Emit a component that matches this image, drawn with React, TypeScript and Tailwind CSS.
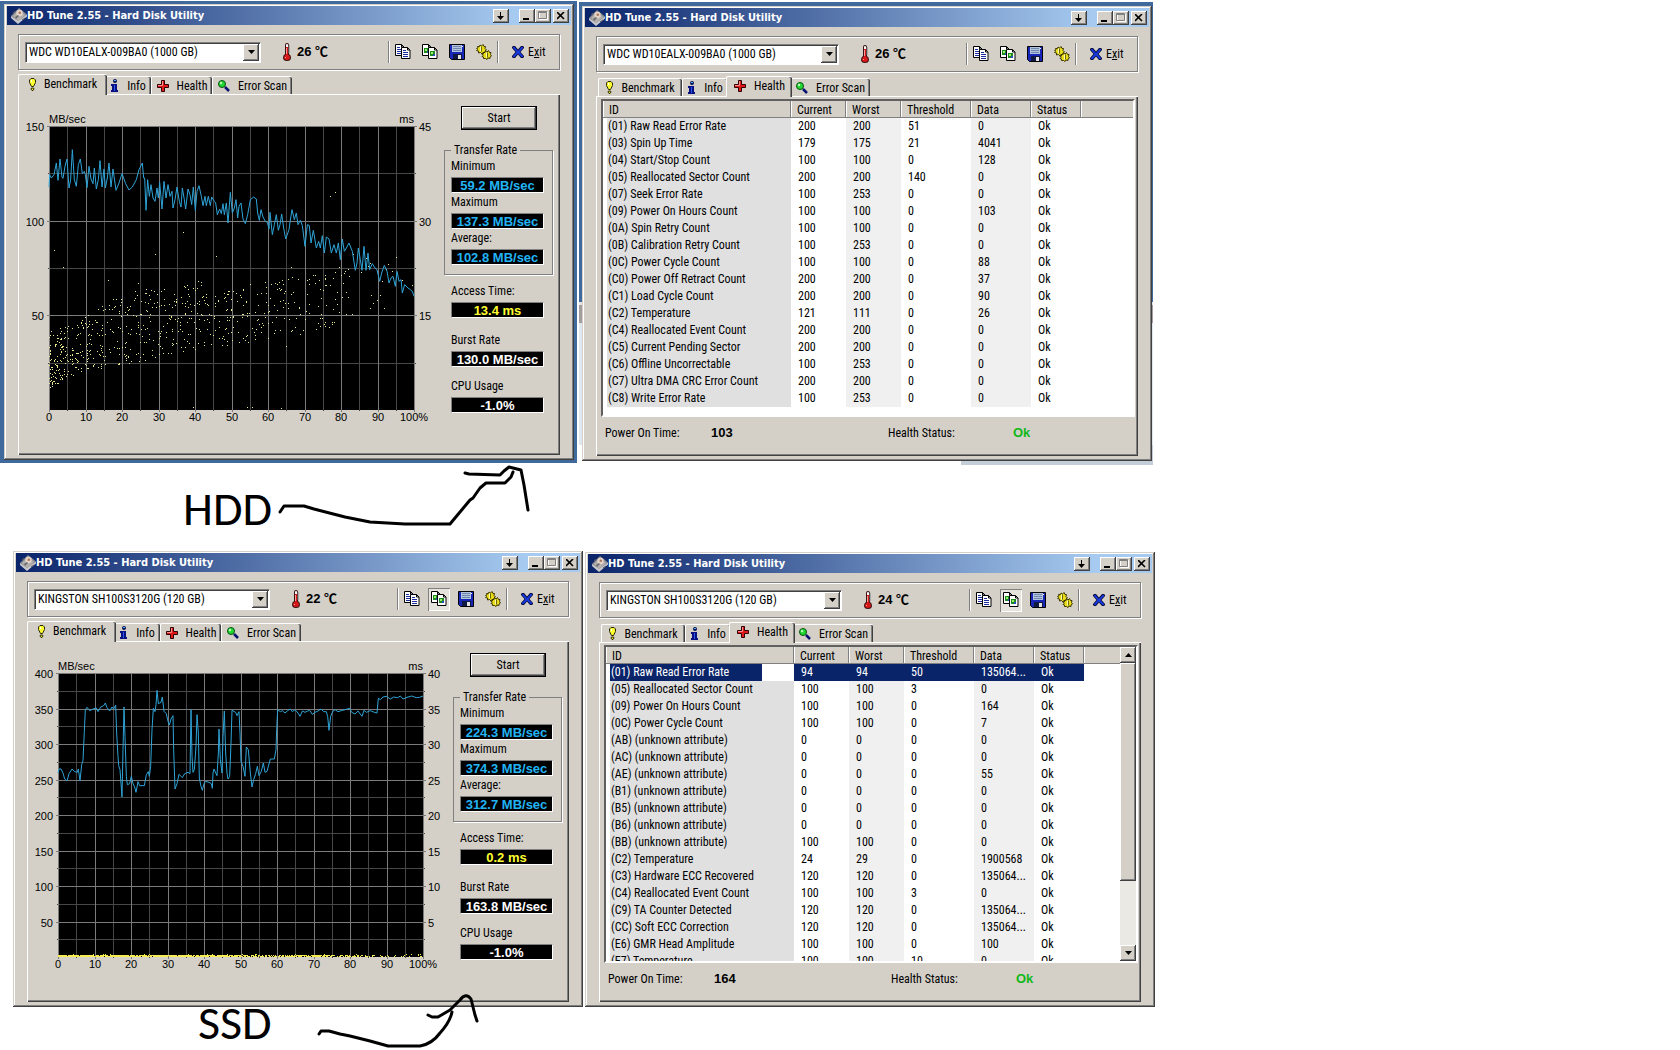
import React from "react";

const UI = "font-['Roboto_Condensed','Liberation_Sans',sans-serif]";
const RAISED =
  "bg-[#d4d0c8] shadow-[inset_-1px_-1px_#404040,inset_1px_1px_#ffffff,inset_-2px_-2px_#808080]";

/* ---------- icons ---------- */

function DiskIcon() {
  return (
    <svg width="16" height="16" viewBox="0 0 16 16" aria-hidden="true">
      <path d="M0 8 8 0l8 6.500L7 15z" fill="#8e8e92" />
      <path d="M0 8l7 5 9-6.500v2L7 16 0 10z" fill="#c8c8cc" />
      <path d="M2 8 8 2l6 5-7 6z" fill="#b4b0ae" />
      <circle cx="8.500" cy="5" r="3.200" fill="#e4d4c8" />
      <circle cx="8.800" cy="4.800" r="1.300" fill="#a8765c" />
      <path d="M4 9l3-2 1 1-3 3z" fill="#6a6a6e" />
      <path d="M2 5l2-2M11 12l3-2" stroke="#55555a" />
    </svg>
  );
}

function ThermometerIcon() {
  return (
    <svg width="12" height="18" viewBox="0 0 12 18" aria-hidden="true">
      <path d="M4 2q0-2 2-2t2 2v9q2 1 2 3.500Q10 18 6 18T2 14.500Q2 12 4 11z" fill="#3a1010" />
      <path d="M5 2q0-1 1-1t1 1v4H5z" fill="#ffffff" />
      <path d="M5 4h2v7.500q2 1 2 3Q9 17 6 17t-3-2.500q0-2 2-3z" fill="#d81818" />
      <path d="M4 14h1v1H4zM5 5h1v6H5z" fill="#ff9c9c" />
      <path d="M8 2v8" stroke="#808080" />
    </svg>
  );
}

function Page({ x, y, children }: { x: number; y: number; children: React.ReactNode }) {
  return (
    <g transform={`translate(${x} ${y})`}>
      <path d="M.5.5h6l2.500 2.500v8.500h-8.500z" fill="#fff" stroke="#000" />
      <path d="M6.500.5v2.500H9" fill="none" stroke="#000" />
      {children}
    </g>
  );
}

function CopyTextIcon() {
  const lines = <path d="M2 3.500h3M2 5.500h5M2 7.500h5M2 9.500h5" stroke="#1c2ca0" />;
  return (
    <svg width="16" height="16" viewBox="0 0 16 16" aria-hidden="true">
      <Page x={0} y={0}>{lines}</Page>
      <Page x={6} y={3}>{lines}</Page>
    </svg>
  );
}

function CopyImageIcon() {
  const shot = (
    <>
      <path d="M2 4h5v5H2z" fill="#1c8a1c" />
      <path d="M3 5h2v2H3z" fill="#9df06a" />
      <path d="M5 7h2v2H5z" fill="#2b4fc0" />
    </>
  );
  return (
    <svg width="16" height="16" viewBox="0 0 16 16" aria-hidden="true">
      <Page x={0} y={0}>{shot}</Page>
      <Page x={6} y={3}>{shot}</Page>
    </svg>
  );
}

function SaveIcon() {
  return (
    <svg width="16" height="16" viewBox="0 0 16 16" aria-hidden="true">
      <path d="M.5.5h15v15H2.500l-2-2z" fill="#1826b8" stroke="#000" />
      <path d="M3 1h10v7H3z" fill="#b4c4dc" />
      <path d="M4 2.500h8M4 4.500h8M4 6.500h8" stroke="#7088b0" />
      <path d="M4 10h9v5H4z" fill="#101840" />
      <path d="M9 11h3v4H9z" fill="#e4e4e4" />
      <path d="M13 2h1v1h-1z" fill="#fff" />
    </svg>
  );
}

function OptionsIcon() {
  return (
    <svg width="16" height="16" viewBox="0 0 16 16" aria-hidden="true">
      <g fill="#e8dc18" stroke="#3c3800" strokeWidth="1">
        <path d="M.5 4.500 2 4 1.500 2.500 3.500 2.500 4 1 5.500 2 7 .5 8 2.500 9.500 2.500 9 4.500 10.500 6 9 7 9 8.500 7 8.500 6 10 4.500 8.500 2.500 9 2.500 7 .5 6.500 1.500 5.500z" />
        <path d="M6 10.500 7.500 10 7 8.500 9 8.500 9.500 7 11 8 12.500 6.500 13.500 8.500 15 8.500 14.500 10.500 15.500 12 14 13 14 14.500 12 14 11 15.500 9.500 14.500 7.500 14.500 7.500 13 6 12.500 7 11.500z" />
      </g>
      <path d="M4.500 2.500v5M10.500 8.500v5" stroke="#fffbb0" />
      <path d="M5.500 2.500v5M11.500 8.500v5" stroke="#6d6600" />
    </svg>
  );
}

function ExitIcon() {
  return (
    <svg width="12" height="12" viewBox="0 0 12 12" aria-hidden="true">
      <path d="M0 1l1-1h2l3 3.500L9 0h2l1 1v1L8.500 6 12 10v1l-1 1H9L6 8.500 3 12H1l-1-1v-1L3.500 6 0 2z" fill="#060a3c" />
      <path d="M1 1h1.500L6 5l3.500-4H11v1L7.500 6 11 10v1H9.500L6 7.500 2.500 11H1v-1l3.500-4L1 2z" fill="#1838e0" />
    </svg>
  );
}

function BulbIcon() {
  return (
    <svg width="7" height="13" viewBox="0 0 7 13" aria-hidden="true">
      <path d="M2 .5h3L6.500 2v2.500L4.500 8.500h-2L.5 4.500V2z" fill="#ffff30" stroke="#2a2a00" />
      <path d="M2 2h1v2H2z" fill="#fff" />
      <path d="M2.500 10h2l.5 1-1 1.500H3L2 11z" fill="#f0e820" stroke="#2a2a00" />
    </svg>
  );
}

function InfoIcon() {
  return (
    <svg width="8" height="13" viewBox="0 0 8 13" aria-hidden="true">
      <circle cx="4" cy="2" r="2" fill="#061050" />
      <path d="M3 1h2v1H3z" fill="#4cb0ff" />
      <path d="M1 5h5v6h1v2H0v-2h1V7H0V5z" fill="#061080" />
      <path d="M3 6h1v6H3z" fill="#2a58f0" />
    </svg>
  );
}

function CrossIcon() {
  return (
    <svg width="12" height="12" viewBox="0 0 12 12" aria-hidden="true">
      <path d="M4.500.5h3v4h4v3h-4v4h-3v-4h-4v-3h4z" fill="#e01818" stroke="#300" />
      <path d="M5.500 1v4.500H1" fill="none" stroke="#ff9090" />
    </svg>
  );
}

function MagnifierIcon() {
  return (
    <svg width="12" height="12" viewBox="0 0 12 12" aria-hidden="true">
      <path d="M7 7l4 4" stroke="#081070" strokeWidth="2.500" />
      <circle cx="4" cy="4" r="3.500" fill="#22d832" stroke="#0a5010" />
      <circle cx="3" cy="3" r="1.200" fill="#b8ffb8" />
    </svg>
  );
}

/* ---------- window shell ---------- */

const captionButton = "flex h-[14px] w-4 items-center justify-center " + RAISED;

function TitleBar() {
  return (
    <header className="flex h-[19px] items-center bg-linear-to-r/srgb from-[#0a246a] to-[#a6caf0] to-90% pl-1 pr-[2px]">
      <DiskIcon />
      <h2 className="flex-1 font-['DejaVu_Sans_Condensed','Noto_Sans',sans-serif] text-[11px] font-bold leading-4 text-white">
        HD Tune 2.55 - Hard Disk Utility
      </h2>
      <button aria-label="Minimize to tray" className={captionButton + " mr-[10px]"}>
        <svg width="8" height="8" viewBox="0 0 8 8"><path d="M3 0h1v4h3L3.500 8 0 4h3z" /></svg>
      </button>
      <button aria-label="Minimize" className={captionButton}>
        <svg width="8" height="8" viewBox="0 0 8 8"><path d="M0 6h6v2H0z" /></svg>
      </button>
      <button aria-label="Maximize" disabled className={captionButton}>
        <svg width="10" height="9" viewBox="0 0 10 9">
          <path d="M1.500 1.500h8v7h-8z" fill="none" stroke="#fff" />
          <path d="M.5.5h8v7h-8zM.5 1.500h8" fill="none" stroke="#808080" />
        </svg>
      </button>
      <button aria-label="Close" className={captionButton + " ml-[2px]"}>
        <svg width="8" height="8" viewBox="0 0 8 8"><path d="M0 0l7 7M7 0L0 7" stroke="#000" strokeWidth="1.600" /></svg>
      </button>
    </header>
  );
}

function ToolButton({ label, pressed, children }: { label: string; pressed?: boolean; children: React.ReactNode }) {
  return (
    <button
      aria-label={label}
      className={
        "flex h-[23px] w-[22px] items-center justify-center " +
        (pressed ? "bg-[#e6e3dd] shadow-[inset_1px_1px_#808080,inset_-1px_-1px_#ffffff]" : "")
      }
    >
      {children}
    </button>
  );
}

function Separator() {
  return <div className="h-[22px] w-[2px] border-l border-r border-l-[#808080] border-r-white" />;
}

function Toolbar({ drive, temp, pressed }: { drive: string; temp: number; pressed?: boolean }) {
  return (
    <div className="mx-[11px] mt-[9px] flex h-9 items-center border border-[#808080] pl-[6px] pr-1 shadow-[inset_1px_1px_#ffffff,1px_1px_#ffffff]">
      <div className="relative w-[236px]">
        <select
          aria-label="Drive"
          className="block h-[21px] w-full appearance-none border border-t-[#808080] border-l-[#808080] border-b-white border-r-white bg-white pl-[3px] text-[12px] leading-4 shadow-[inset_1px_1px_#404040]"
        >
          <option>{drive}</option>
        </select>
        <div className={"pointer-events-none absolute right-[2px] top-[2px] flex h-[17px] w-4 items-center justify-center " + RAISED}>
          <svg width="7" height="4" viewBox="0 0 7 4"><path d="M0 0h7L3.500 4z" /></svg>
        </div>
      </div>
      <div className="ml-5 flex items-center gap-1 font-['Liberation_Sans','Noto_Sans_CJK_SC',sans-serif] text-[13px] font-bold">
        <ThermometerIcon />
        <span>{temp} ℃</span>
      </div>
      <div className="ml-auto flex items-center">
        <Separator />
        <div className="mx-[2px] flex gap-[5px]">
          <ToolButton label="Copy text"><CopyTextIcon /></ToolButton>
          <ToolButton label="Copy screenshot" pressed={pressed}><CopyImageIcon /></ToolButton>
          <ToolButton label="Save"><SaveIcon /></ToolButton>
          <ToolButton label="Options"><OptionsIcon /></ToolButton>
        </div>
        <Separator />
        <button className="flex h-[22px] w-14 items-center gap-1 pl-[13px] text-[12px]">
          <ExitIcon />
          <span>E<span className="underline">x</span>it</span>
        </button>
      </div>
    </div>
  );
}

const tabs = [
  { name: "Benchmark", icon: <BulbIcon />, on: "w-[89px]", off: "w-[84px]" },
  { name: "Info", icon: <InfoIcon />, on: "w-[50px]", off: "w-[46px]" },
  { name: "Health", icon: <CrossIcon />, on: "w-[66px]", off: "w-[61px]" },
  { name: "Error Scan", icon: <MagnifierIcon />, on: "w-[84px]", off: "w-[80px]" },
];

function Tabs({ active }: { active: string }) {
  return (
    <div role="tablist" className="relative mt-1 flex h-5 items-end pl-[13px]">
      {tabs.map((t) => {
        const on = t.name === active;
        return (
          <button
            key={t.name}
            role="tab"
            aria-selected={on}
            className={
              "flex items-center justify-center gap-2 rounded-t-[2px] border-l border-t border-l-white border-t-white bg-[#d4d0c8] text-[12px] leading-4 shadow-[inset_-1px_0_#404040,inset_-2px_0_#808080] " +
              (on ? "relative z-10 -mx-[2px] -mb-px h-[21px] pb-[2px] " + t.on : "h-[18px] " + t.off)
            }
          >
            {t.icon}
            {t.name}
          </button>
        );
      })}
    </div>
  );
}

type WindowProps = {
  place: string;
  drive: string;
  temp: number;
  tab: string;
  pressed?: boolean;
  children: React.ReactNode;
};

function HdTuneWindow({ place, drive, temp, tab, pressed, children }: WindowProps) {
  return (
    <section
      className={
        "absolute w-[570px] bg-[#d4d0c8] px-[3px] pb-[5px] pt-[2px] shadow-[inset_-1px_-1px_#404040,inset_1px_1px_#d4d0c8,inset_-2px_-2px_#808080,inset_2px_2px_#ffffff] " +
        place
      }
    >
      <TitleBar />
      <Toolbar drive={drive} temp={temp} pressed={pressed} />
      <Tabs active={tab} />
      <div
        role="tabpanel"
        className="mx-[11px] border-l border-t border-l-white border-t-white shadow-[inset_-1px_-1px_#404040,inset_-2px_-2px_#808080]"
      >
        {children}
      </div>
    </section>
  );
}

/* ---------- benchmark ---------- */

const GW = 365;
const GH = 284;
const OX = 30;
const OY = 30;

type ChartProps = {
  name: string;
  left: number[];
  right: number[];
  steps: number;
  line: string;
  origin: [number, number];
  dots: number[][];
  dotColor: string;
};

function Chart({ name, left, right, steps, line, origin, dots, dotColor }: ChartProps) {
  const ticks = Array.from({ length: 21 }, (_, i) => i);
  const rows = Array.from({ length: steps * 2 + 1 }, (_, i) => i);
  const xAt = (i: number) => Math.round((GW * i) / 20) + 0.5;
  const yAt = (i: number) => Math.round((GH * i) / (steps * 2)) + 0.5;
  return (
    <svg
      role="img"
      aria-label={name}
      width="425"
      height="359"
      viewBox="0 0 425 359"
      className="shrink-0 font-['Liberation_Sans',sans-serif] text-[11px]"
    >
      <text x={OX} y="27">MB/sec</text>
      <text x={OX + GW} y="27" textAnchor="end">ms</text>
      {left.map((v, i) => (
        <text key={v} x={OX - 5} y={OY + yAt(i * 2) + 4} textAnchor="end">{v}</text>
      ))}
      {right.map((v, i) => (
        <text key={v} x={OX + GW + 5} y={OY + yAt(i * 2) + 4}>{v}</text>
      ))}
      {ticks.filter((i) => i % 2 === 0).map((i) => (
        <text key={i} x={OX + xAt(i) - 0.5} y={OY + GH + 11} textAnchor="middle">
          {i === 20 ? "100%" : i * 5}
        </text>
      ))}
      <g transform={`translate(${OX} ${OY})`}>
        <rect width={GW + 1} height={GH} fill="#000" />
        <g stroke="#474747">
          {ticks.filter((i) => i % 2).map((i) => <path key={i} d={`M${xAt(i)} 0V${GH + 1}`} />)}
          {rows.filter((i) => i % 2).map((i) => <path key={i} d={`M-1 ${yAt(i)}H${GW + 2}`} />)}
        </g>
        <g stroke="#7b7b7b">
          {ticks.filter((i) => i % 2 === 0).map((i) => <path key={i} d={`M${xAt(i)} 0V${GH + 2}`} />)}
          {rows.filter((i) => i % 2 === 0 && i < steps * 2).map((i) => (
            <path key={i} d={`M-2 ${yAt(i)}H${GW + 3}`} />
          ))}
        </g>
        {dots.map(([x, y], i) => <rect key={i} x={x} y={y} width="1" height="1" fill={dotColor} />)}
        <g transform={`scale(${1 / 3}) translate(${-origin[0]} ${-origin[1]})`}>
          <polyline points={line} fill="none" stroke="#2fa4d8" strokeWidth="3" />
        </g>
      </g>
    </svg>
  );
}

const hddLine =
  "148,262 150,225 155,235 163,225 170,190 175,242 181,178 187,232 190,236 196,200 202,178 208,265 213,240 218,150 224,240 230,260 236,195 242,178 248,222 254,215 257,225 262,264 268,200 274,238 280,252 284,205 290,268 296,240 301,183 307,262 313,208 317,265 323,235 328,190 334,262 340,208 349,272 358,250 367,222 378,252 388,271 398,262 410,240 418,210 428,190 432,235 435,235 439,332 444,240 449,290 454,255 460,295 466,305 472,265 476,295 480,248 487,328 493,245 499,295 505,255 511,290 517,275 520,325 526,300 532,262 539,305 544,322 548,265 554,300 558,328 565,268 571,285 576,315 581,262 587,332 592,275 598,258 605,290 610,318 616,290 620,318 626,290 632,318 636,292 644,305 648,310 653,345 660,328 665,342 670,312 674,345 680,310 685,370 692,278 698,340 704,325 709,300 714,355 718,320 724,310 730,358 737,372 744,345 752,300 762,292 770,298 774,340 779,362 784,330 790,352 797,365 803,368 808,388 811,338 818,405 824,375 830,345 836,392 841,375 846,343 852,385 858,418 868,390 873,355 877,330 884,360 890,340 895,375 902,362 908,378 916,440 923,375 929,378 934,430 941,392 950,445 957,425 962,445 968,408 974,460 980,412 988,418 995,460 1003,435 1010,460 1016,430 1022,480 1028,418 1034,455 1040,445 1048,430 1058,455 1067,512 1072,490 1076,445 1082,480 1087,512 1093,440 1099,512 1105,460 1110,510 1118,492 1126,505 1132,510 1140,545 1146,520 1154,497 1162,515 1168,550 1174,535 1180,530 1187,560 1192,515 1198,545 1204,540 1208,580 1215,555 1225,565 1232,570 1238,575 1243,590";

const ssdLine =
  "175,370 178,358 184,358 190,370 195,388 202,394 208,372 217,358 225,366 233,368 236,358 241,394 246,345 250,332 254,245 257,180 262,173 270,183 280,178 290,175 295,186 303,172 312,168 317,160 322,174 330,184 337,172 342,178 348,166 351,250 355,320 357,348 361,360 367,442 370,300 373,172 376,260 380,380 383,405 390,402 395,380 400,402 405,412 409,428 415,396 420,408 434,408 440,375 446,366 449,380 453,350 457,240 461,176 466,186 469,165 472,122 476,162 484,158 488,142 493,185 500,192 505,215 509,226 514,208 520,198 522,300 526,418 532,402 538,374 548,384 555,372 565,368 571,372 574,180 577,320 580,368 584,360 589,290 592,195 596,250 599,385 604,410 608,422 613,402 618,395 628,398 635,402 638,416 640,370 643,358 652,378 656,310 658,238 662,330 667,370 670,260 674,184 678,310 682,370 685,388 690,380 694,280 697,182 708,188 712,198 718,186 721,250 724,335 730,350 736,380 740,292 746,300 752,370 757,412 762,390 768,372 773,350 778,378 785,365 791,340 796,368 802,365 812,328 824,328 829,300 831,240 834,180 842,186 848,183 856,190 864,183 872,178 878,186 886,180 895,190 901,200 908,184 916,188 924,184 930,182 938,194 946,188 955,184 964,178 972,186 980,186 984,200 988,242 993,200 1000,184 1006,180 1015,186 1025,183 1036,180 1050,176 1056,188 1066,193 1075,184 1087,200 1093,182 1100,188 1112,183 1124,188 1132,190 1136,146 1142,150 1150,142 1160,140 1172,148 1182,142 1194,144 1202,139 1210,148 1222,143 1236,139 1250,144 1260,143 1270,139";

function makeRandom(seed: number) {
  let s = seed;
  return () => {
    s = (s * 1103515245 + 12345) % 2147483648;
    return s / 2147483648;
  };
}

/* Access times: dense near the start of the disk, rising and thinning toward the end. */
function hddDots() {
  const rnd = makeRandom(77);
  const out: number[][] = [
    [5, 124], [14, 141], [59, 154], [134, 106], [106, 128], [167, 130], [89, 157], [281, 70], [286, 66],
    [242, 141], [144, 281], [198, 281], [203, 281], [232, 282], [237, 220], [347, 131], [312, 146],
    [339, 138], [343, 145], [335, 182], [322, 169], [319, 140], [337, 143], [303, 188], [363, 159], [353, 154],
    [328, 174], [321, 182], [324, 177], [331, 169], [333, 155], [290, 141], [304, 128], [300, 150], [299, 171],
    [317, 132], [321, 137], [297, 188], [290, 186], [273, 192],
  ];
  const low = [262, 246, 242, 236, 228, 222, 219, 214, 212, 204, 192, 188, 184];
  const high = [205, 195, 172, 160, 158, 153, 156, 152, 150, 148, 138, 132, 128];
  for (let i = 0; i < 830; i++) {
    const t = Math.pow(rnd(), 1.35) * 0.82;
    const p = t * 12;
    const k = Math.floor(p);
    const f = p - k;
    const lo = low[k] + (low[k + 1] - low[k]) * f;
    const hi = high[k] + (high[k + 1] - high[k]) * f;
    if (rnd() < t * 0.6) continue;
    out.push([Math.round(t * GW), Math.round(lo + (hi - lo) * Math.pow(rnd(), 1.15))]);
  }
  return out;
}

function ssdDots() {
  const rnd = makeRandom(5);
  const out: number[][] = [];
  for (let x = 0; x < GW; x++) {
    const density = x < 180 ? 0.97 : x < 270 ? 0.8 : x < 310 ? 0.5 : 0.22;
    if (rnd() < density) out.push([x, 283]);
    if (rnd() < density * 0.9) out.push([x, 282]);
    if (rnd() < 0.04) out.push([x, 281]);
  }
  return out;
}

function Reading({ label, value, color }: { label: string; value: string; color: string }) {
  return (
    <label className="block">
      <span className="block">{label}</span>
      <output
        className={
          "mt-[3px] block h-4 w-[93px] border border-t-[#808080] border-l-[#808080] border-b-white border-r-white bg-black text-center font-['Liberation_Sans',sans-serif] text-[13px] font-bold leading-[15px] " +
          color
        }
      >
        {value}
      </output>
    </label>
  );
}

function Benchmark({ chart, values }: { chart: ChartProps; values: string[] }) {
  return (
    <div className="flex pt-px">
      <Chart {...chart} />
      <div className="text-[12px] leading-4">
        <button className="ml-[17px] mt-[10px] block h-6 w-[76px] border border-black bg-[#d4d0c8] text-center leading-5 shadow-[inset_-1px_-1px_#404040,inset_1px_1px_#ffffff,inset_-2px_-2px_#808080]">
          Start
        </button>
        <fieldset className="mt-3 w-[109px] border border-[#808080] pb-[9px] pl-[6px] shadow-[1px_1px_#ffffff]">
          <legend className="px-[3px]">Transfer Rate</legend>
          <div className="flex flex-col gap-px">
            <Reading label="Minimum" value={values[0]} color="text-[#22b4f4]" />
            <Reading label="Maximum" value={values[1]} color="text-[#22b4f4]" />
            <Reading label="Average:" value={values[2]} color="text-[#22b4f4]" />
          </div>
        </fieldset>
        <div className="ml-[7px] mt-2 flex flex-col">
          <Reading label="Access Time:" value={values[3]} color="text-[#ffff30]" />
          <div className="mb-[11px] mt-[14px]">
            <Reading label="Burst Rate" value={values[4]} color="text-white" />
          </div>
          <Reading label="CPU Usage" value={values[5]} color="text-white" />
        </div>
      </div>
    </div>
  );
}

/* ---------- health ---------- */

type Row = [string, string, string, string, string];

const hddRows: Row[] = [
  ["(01) Raw Read Error Rate", "200", "200", "51", "0"],
  ["(03) Spin Up Time", "179", "175", "21", "4041"],
  ["(04) Start/Stop Count", "100", "100", "0", "128"],
  ["(05) Reallocated Sector Count", "200", "200", "140", "0"],
  ["(07) Seek Error Rate", "100", "253", "0", "0"],
  ["(09) Power On Hours Count", "100", "100", "0", "103"],
  ["(0A) Spin Retry Count", "100", "100", "0", "0"],
  ["(0B) Calibration Retry Count", "100", "253", "0", "0"],
  ["(0C) Power Cycle Count", "100", "100", "0", "88"],
  ["(C0) Power Off Retract Count", "200", "200", "0", "37"],
  ["(C1) Load Cycle Count", "200", "200", "0", "90"],
  ["(C2) Temperature", "121", "111", "0", "26"],
  ["(C4) Reallocated Event Count", "200", "200", "0", "0"],
  ["(C5) Current Pending Sector", "200", "200", "0", "0"],
  ["(C6) Offline Uncorrectable", "100", "253", "0", "0"],
  ["(C7) Ultra DMA CRC Error Count", "200", "200", "0", "0"],
  ["(C8) Write Error Rate", "100", "253", "0", "0"],
];

const ssdRows: Row[] = [
  ["(01) Raw Read Error Rate", "94", "94", "50", "135064..."],
  ["(05) Reallocated Sector Count", "100", "100", "3", "0"],
  ["(09) Power On Hours Count", "100", "100", "0", "164"],
  ["(0C) Power Cycle Count", "100", "100", "0", "7"],
  ["(AB) (unknown attribute)", "0", "0", "0", "0"],
  ["(AC) (unknown attribute)", "0", "0", "0", "0"],
  ["(AE) (unknown attribute)", "0", "0", "0", "55"],
  ["(B1) (unknown attribute)", "0", "0", "0", "0"],
  ["(B5) (unknown attribute)", "0", "0", "0", "0"],
  ["(B6) (unknown attribute)", "0", "0", "0", "0"],
  ["(BB) (unknown attribute)", "100", "100", "0", "0"],
  ["(C2) Temperature", "24", "29", "0", "1900568"],
  ["(C3) Hardware ECC Recovered", "120", "120", "0", "135064..."],
  ["(C4) Reallocated Event Count", "100", "100", "3", "0"],
  ["(C9) TA Counter Detected", "120", "120", "0", "135064..."],
  ["(CC) Soft ECC Correction", "120", "120", "0", "135064..."],
  ["(E6) GMR Head Amplitude", "100", "100", "0", "100"],
  ["(E7) Temperature", "100", "100", "10", "0"],
];

const columns = ["ID", "Current", "Worst", "Threshold", "Data", "Status", ""];

function Scrollbar() {
  return (
    <div className="flex w-4 shrink-0 flex-col bg-[#ebe9e4]">
      <button aria-label="Scroll up" className={"flex h-4 items-center justify-center " + RAISED}>
        <svg width="7" height="4" viewBox="0 0 7 4"><path d="M0 4h7L3.500 0z" /></svg>
      </button>
      <div className={"h-[218px] " + RAISED} />
      <button aria-label="Scroll down" className={"mt-auto flex h-4 items-center justify-center " + RAISED}>
        <svg width="7" height="4" viewBox="0 0 7 4"><path d="M0 0h7L3.500 4z" /></svg>
      </button>
    </div>
  );
}

function Health({ rows, selected, hours, scroll }: { rows: Row[]; selected?: number; hours: string; scroll?: boolean }) {
  return (
    <div className="pl-1 pr-[3px] pt-[2px] text-[12px]">
      <div className="flex h-[318px] overflow-hidden border-2 border-t-[#606060] border-l-[#606060] border-b-white border-r-white bg-white">
        <div className="min-w-0 flex-1 overflow-hidden">
          <table className="w-full table-fixed border-collapse text-left">
            <colgroup>
              <col className="w-[188px]" />
              <col className="w-[55px]" />
              <col className="w-[55px]" />
              <col className="w-[70px]" />
              <col className="w-[60px]" />
              <col className="w-[50px]" />
              <col />
            </colgroup>
            <thead>
              <tr className="h-[17px] bg-[#d4d0c8] leading-4">
                {columns.map((c, i) => (
                  <th
                    key={c}
                    scope="col"
                    className={
                      "p-0 pl-[6px] font-normal " +
                      (i < 6
                        ? "shadow-[inset_0_-1px_#808080,inset_-1px_0_#808080,inset_1px_0_#ffffff]"
                        : "shadow-[inset_0_-1px_#808080,inset_1px_0_#ffffff]")
                    }
                  >
                    {c}
                  </th>
                ))}
              </tr>
            </thead>
            <tbody>
              {rows.map((r, n) => {
                const sel = n === selected;
                return (
                  <tr key={r[0]} className={"h-[17px] leading-[17px] " + (sel ? "text-white" : "")}>
                    <th scope="row" className="p-0 pl-1 font-normal">
                      <div className={"pl-px " + (sel ? "w-[152px] bg-[#0a246a]" : "bg-[#e0e0e0]")}>{r[0]}</div>
                    </th>
                    <td className={"p-0 pl-[7px] " + (sel ? "bg-[#0a246a]" : "")}>{r[1]}</td>
                    <td className={"p-0 pl-[7px] " + (sel ? "bg-[#0a246a]" : "bg-[#f0f0f0]")}>{r[2]}</td>
                    <td className={"p-0 pl-[7px] " + (sel ? "bg-[#0a246a]" : "")}>{r[3]}</td>
                    <td className={"p-0 pl-[7px] " + (sel ? "bg-[#0a246a]" : "bg-[#f0f0f0]")}>{r[4]}</td>
                    <td className={"p-0 pl-[7px] " + (sel ? "bg-[#0a246a]" : "")}>Ok</td>
                    <td className="p-0" />
                  </tr>
                );
              })}
            </tbody>
          </table>
        </div>
        {scroll && <Scrollbar />}
      </div>
      <div className="flex h-[39px] items-start pl-1 pt-2 leading-4">
        <span className="w-[106px]">Power On Time:</span>
        <b className="w-[177px] font-['Liberation_Sans',sans-serif] text-[13px]">{hours}</b>
        <span className="w-[125px]">Health Status:</span>
        <b className="font-['Liberation_Sans',sans-serif] text-[13px] text-[#10b818]">Ok</b>
      </div>
    </div>
  );
}

/* ---------- page ---------- */

const hddDotList = hddDots();
const ssdDotList = ssdDots();

export default function App() {
  return (
    <main className={"relative min-h-screen w-full overflow-hidden bg-white text-black " + UI}>
      {/* strips of the desktop that show around the upper windows */}
      <div className="absolute left-0 top-[1px] h-[462px] w-[577px] bg-[#416a9c]" />
      <div className="absolute left-[579px] top-[2px] flex h-[443px] w-[574px] flex-col bg-[#dfe8f0]">
        <div className="h-[300px] bg-[#416a9c]" />
        <div className="h-[3px] bg-[#e4e4e4]" />
        <div className="h-[18px] bg-[#a39d9d]" />
      </div>
      <div className="absolute left-[961px] top-[445px] h-[20px] w-[192px] bg-[#c4ced8]" />

      <HdTuneWindow place="left-[4px] top-[4px]" drive="WDC WD10EALX-009BA0 (1000 GB)" temp={26} tab="Benchmark">
        <Benchmark
          chart={{
            name: "Transfer rate and access time, WDC WD10EALX",
            left: [150, 100, 50],
            right: [45, 30, 15],
            steps: 3,
            line: hddLine,
            origin: [148, 79],
            dots: hddDotList,
            dotColor: "#e8e890",
          }}
          values={["59.2 MB/sec", "137.3 MB/sec", "102.8 MB/sec", "13.4 ms", "130.0 MB/sec", "-1.0%"]}
        />
      </HdTuneWindow>

      <HdTuneWindow place="left-[582px] top-[6px]" drive="WDC WD10EALX-009BA0 (1000 GB)" temp={26} tab="Health">
        <Health rows={hddRows} hours="103" />
      </HdTuneWindow>

      <HdTuneWindow place="left-[13px] top-[551px]" drive="KINGSTON SH100S3120G (120 GB)" temp={22} tab="Benchmark" pressed>
        <Benchmark
          chart={{
            name: "Transfer rate and access time, KINGSTON SH100S3120G",
            left: [400, 350, 300, 250, 200, 150, 100, 50],
            right: [40, 35, 30, 25, 20, 15, 10, 5],
            steps: 8,
            line: ssdLine,
            origin: [175, 70],
            dots: ssdDotList,
            dotColor: "#f4ec50",
          }}
          values={["224.3 MB/sec", "374.3 MB/sec", "312.7 MB/sec", "0.2 ms", "163.8 MB/sec", "-1.0%"]}
        />
      </HdTuneWindow>

      <HdTuneWindow place="left-[585px] top-[552px]" drive="KINGSTON SH100S3120G (120 GB)" temp={24} tab="Health" pressed>
        <Health rows={ssdRows} selected={0} hours="164" scroll />
      </HdTuneWindow>

      {/* handwritten captions and arrows drawn over the canvas */}
      <p className="absolute left-[183px] top-[485px] font-['Carlito','Lato',sans-serif] text-[48px] leading-[48px]">HDD</p>
      <p className="absolute left-[198px] top-[999px] font-['Carlito','Lato',sans-serif] text-[48px] leading-[48px]">SSD</p>
      <svg
        className="pointer-events-none absolute left-[270px] top-[460px]"
        width="270"
        height="80"
        viewBox="0 0 270 80"
        fill="none"
        stroke="#000"
        strokeWidth="3"
        strokeLinecap="round"
        strokeLinejoin="round"
        aria-hidden="true"
      >
        <path d="M10 52L12 49 14 46H34L44 49 75 57 100 62 135 64H180L190 52 200 40 203 38 210 28 216 23H235L241 17 243 12" />
        <path d="M195 13L199 14 230 15 234 11 239 7 251 10 254 25 258 50" />
      </svg>
      <svg
        className="pointer-events-none absolute left-[310px] top-[985px]"
        width="180"
        height="65"
        viewBox="0 0 180 65"
        fill="none"
        stroke="#000"
        strokeWidth="3"
        strokeLinecap="round"
        strokeLinejoin="round"
        aria-hidden="true"
      >
        <path d="M9 49L11 46H19L30 49 40 51 60 56 78 61H110Q122 59 130 48 140 37 142 27" />
        <path d="M118 30L122 32H128L140 25 150 15Q156 7 161 14L165 30 167 36" />
      </svg>
    </main>
  );
}
